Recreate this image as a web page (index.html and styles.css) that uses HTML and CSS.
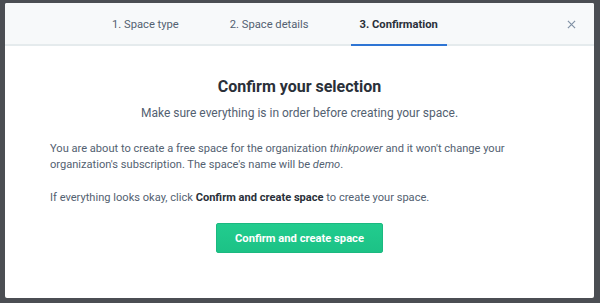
FILE: index.html
```
<!DOCTYPE html>
<html lang="en">
<head>
    <meta charset="UTF-8">
    <title>Create space - Confirmation</title>
    <link rel="stylesheet" href="styles.css">
</head>
<body>
    <div class="modal">
        <!-- Wizard steps -->
        <div class="modal-header">
            <div class="steps">
                <div class="step">1. Space type</div>
                <div class="step">2. Space details</div>
                <div class="step active">3. Confirmation</div>
            </div>
            <button class="close-btn" aria-label="Close">
                <svg width="9" height="9" viewBox="0 0 10 10">
                    <path d="M1 1L9 9M9 1L1 9" stroke="#8091a5" stroke-width="1.3" fill="none"/>
                </svg>
            </button>
        </div>

        <!-- Confirmation body -->
        <div class="modal-body">
            <h2 class="confirm-title">Confirm your selection</h2>
            <p class="confirm-sub">Make sure everything is in order before creating your space.</p>
            <p class="confirm-text">You are about to create a free space for the organization <em>thinkpower</em> and it won't change your organization's subscription. The space's name will be <em>demo</em>.</p>
            <p class="confirm-text">If everything looks okay, click <strong>Confirm and create space</strong> to create your space.</p>
            <div class="actions">
                <button class="primary-btn">Confirm and create space</button>
            </div>
        </div>
    </div>
</body>
</html>
```
FILE: styles.css
```
* {
    margin: 0;
    padding: 0;
    box-sizing: border-box;
}
:root {
    --overlay: #4b4e53;
    --header-bg: #f7f9fa;
    --border: #e5ebed;
    --text-dark: #2a3039;
    --text-mid: #536171;
    --blue: #2e75d4;
    --green: #1fc78a;
}
body {
    font-family: Roboto, 'Liberation Sans', Arial, sans-serif;
    background: var(--overlay);
    height: 303px;
    padding: 3px 6px 5px 5px;
    overflow: hidden;
}
.modal {
    background: #fff;
    height: 100%;
    border-radius: 2px;
    overflow: hidden;
}
/* Header with steps */
.modal-header {
    display: flex;
    align-items: stretch;
    height: 43px;
    background: var(--header-bg);
    border-bottom: 2px solid var(--border);
    padding-left: 98px;
    padding-right: 18px;
}
.steps {
    display: flex;
    gap: 33px;
}
.step {
    display: flex;
    align-items: center;
    padding: 2px 9px 0;
    font-size: 11.2px;
    color: var(--text-mid);
    border-bottom: 2px solid transparent;
    margin-bottom: -2px;
}
.step.active {
    color: var(--text-dark);
    font-weight: 700;
    border-bottom-color: var(--blue);
}
.close-btn {
    margin-left: auto;
    background: none;
    border: none;
    display: flex;
    align-items: center;
    padding-top: 2px;
    cursor: pointer;
}
/* Body */
.modal-body {
    padding: 29px 45px 0;
    color: var(--text-mid);
}
.confirm-title {
    font-size: 16px;
    font-weight: 700;
    color: var(--text-dark);
    text-align: center;
    line-height: 24px;
}
.confirm-sub {
    font-size: 12px;
    text-align: center;
    line-height: 20px;
    margin-top: 4px;
    margin-bottom: 18px;
}
.confirm-text {
    font-size: 11.1px;
    line-height: 16px;
    margin-bottom: 17px;
}
.confirm-text strong {
    color: var(--text-dark);
    font-weight: 700;
}
.actions {
    display: flex;
    justify-content: center;
    margin-top: 17px;
}
.primary-btn {
    font-family: inherit;
    width: 167px;
    height: 30px;
    background: linear-gradient(#22cc8e, #1cc286);
    color: #fff;
    font-size: 11.2px;
    font-weight: 700;
    border: 1px solid #1bb980;
    border-radius: 2px;
    cursor: pointer;
}
```
